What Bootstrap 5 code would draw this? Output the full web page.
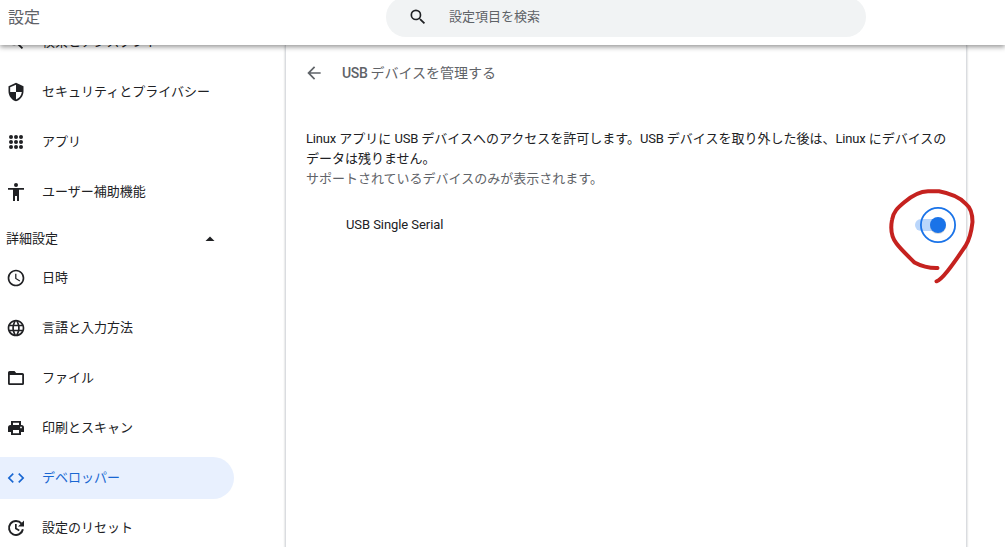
<!DOCTYPE html>
<html lang="ja">
<head>
<meta charset="utf-8">
<meta name="viewport" content="width=device-width, initial-scale=1">
<title>設定</title>
<link href="https://cdn.jsdelivr.net/npm/bootstrap@5.3.0/dist/css/bootstrap.min.css" rel="stylesheet">
<style>
  body { font-family: Roboto, "Noto Sans CJK JP", sans-serif; font-size: 13px; line-height: 20px; color: #202124; background: #fff; }
  .app-header { height: 45px; z-index: 2; background: #fff; box-shadow: 0 2px 5px rgba(0,0,0,.42); }
  .app-title { width: 386px; padding-left: 8px; font-size: 16px; line-height: 24px; color: #5f6368; margin-top: 6px; }
  .search-box { width: 480px; height: 40px; margin-top: -3px; padding-left: 22px; border-radius: 20px; background: #f1f3f4; color: #5f6368; }
  .search-box svg { margin-right: 21px; color: #202124; }
  .side-menu { width: 285px; }
  .side-menu .nav { gap: 8px; }
  .side-menu .nav:first-child { margin-top: -24px; }
  .menu-item { width: 234px; height: 42px; padding: 0 0 0 6px; gap: 16px; color: #202124; border-radius: 0 21px 21px 0; }
  .menu-item:hover { color: #202124; }
  .menu-item.active, .menu-item.active:hover { background: #e8f0fe; color: #1967d2; }
  .menu-group { width: 220px; height: 40px; margin: 4px 0 0; padding: 4px 0 0 6px; }
  .panel { width: 682px; border: 1px solid #dadce0; border-width: 0 1px; box-shadow: 0 0 2px rgba(60,64,67,.3); }
  .panel-head { height: 56px; padding-left: 18px; gap: 18px; color: #5f6368; }
  .panel-head h1 { font-size: 14px; font-weight: 400; line-height: 20px; word-spacing: -.4px; }
  .latin { letter-spacing: -.2px; }
  .panel-head .latin { font-weight: 500; letter-spacing: -.35px; }
  .panel-text { padding: 28px 18px 0 20px; }
  .hint { color: #5f6368; }
  .device-row { height: 52px; padding: 0 10px 0 60px; margin-top: 10px; }
  .device-name { letter-spacing: -.07px; }
  .toggle-area { width: 41px; height: 36px; }
  .mark-ring { left: -31px; top: -22px; z-index: 3; pointer-events: none; }
  svg { flex: none; fill: currentColor; }
</style>
</head>
<body class="vh-100 overflow-hidden d-flex flex-column">
<header class="app-header d-flex align-items-start position-relative flex-shrink-0">
  <div class="app-title">設定</div>
  <div class="search-box d-flex align-items-center">
    <svg width="20" height="20" viewBox="0 0 24 24"><path d="M15.5 14h-.79l-.28-.27A6.47 6.47 0 0 0 16 9.5 6.5 6.5 0 1 0 9.500 16c1.610 0 3.090-.59 4.230-1.570l.27.28v.79l5 4.990L20.490 19zM9.500 14a4.500 4.500 0 1 1 0-9 4.500 4.500 0 0 1 0 9z"/></svg>
    <span>設定項目を検索</span>
  </div>
</header>
<div class="d-flex flex-grow-1">
  <aside class="side-menu flex-shrink-0">
    <nav class="nav flex-column flex-nowrap">
      <a class="menu-item d-flex align-items-center text-decoration-none" href="#">
        <svg width="20" height="20" viewBox="0 0 24 24"><path d="M15.500 14h-.79l-.28-.27A6.470 6.470 0 0 0 16 9.500 6.500 6.500 0 1 0 9.500 16c1.610 0 3.090-.59 4.230-1.570l.27.28v.79l5 4.990L20.490 19zM9.500 14a4.500 4.500 0 1 1 0-9 4.500 4.500 0 0 1 0 9z"/></svg>検索とアシスタント</a>
      <a class="menu-item d-flex align-items-center text-decoration-none" href="#">
        <svg width="20" height="20" viewBox="0 0 24 24"><path d="M12 1 3 5v6c0 5.550 3.840 10.740 9 12 5.160-1.260 9-6.450 9-12V5zm0 10.990h7c-.53 4.120-3.280 7.790-7 8.940V12H5V6.300l7-3.110z"/></svg>セキュリティとプライバシー</a>
      <a class="menu-item d-flex align-items-center text-decoration-none" href="#">
        <svg width="20" height="20" viewBox="0 0 20 20"><g><circle cx="5" cy="5" r="2"/><circle cx="10" cy="5" r="2"/><circle cx="15" cy="5" r="2"/><circle cx="5" cy="10" r="2"/><circle cx="10" cy="10" r="2"/><circle cx="15" cy="10" r="2"/><circle cx="5" cy="15" r="2"/><circle cx="10" cy="15" r="2"/><circle cx="15" cy="15" r="2"/></g></svg>アプリ</a>
      <a class="menu-item d-flex align-items-center text-decoration-none" href="#">
        <svg width="20" height="20" viewBox="0 0 20 20"><circle cx="10" cy="3" r="2"/><path d="M2 6h16v1.800h-5V19h-2v-5H9v5H7V7.800H2z"/></svg>ユーザー補助機能</a>
    </nav>
    <div class="menu-group d-flex align-items-center justify-content-between">
      <span>詳細設定</span>
      <svg width="20" height="20" viewBox="0 0 20 20"><path d="M5.500 12 10 7.500l4.500 4.500z"/></svg>
    </div>
    <nav class="nav flex-column flex-nowrap">
      <a class="menu-item d-flex align-items-center text-decoration-none" href="#">
        <svg width="20" height="20" viewBox="0 0 24 24"><path d="M11.990 2C6.470 2 2 6.480 2 12s4.470 10 9.990 10C17.520 22 22 17.520 22 12S17.520 2 11.990 2zM12 20a8 8 0 1 1 0-16 8 8 0 0 1 0 16zm.5-13H11v6l5.250 3.150.75-1.230-4.500-2.670z"/></svg>日時</a>
      <a class="menu-item d-flex align-items-center text-decoration-none" href="#">
        <svg width="20" height="20" viewBox="0 0 24 24"><path d="M11.990 2C6.470 2 2 6.480 2 12s4.470 10 9.990 10C17.520 22 22 17.520 22 12S17.520 2 11.990 2zm6.930 6h-2.950a15.650 15.650 0 0 0-1.380-3.560A8.030 8.030 0 0 1 18.920 8zM12 4.040c.83 1.200 1.480 2.530 1.910 3.960h-3.820c.43-1.430 1.080-2.760 1.910-3.960zM4.260 14a8.240 8.240 0 0 1 0-4h3.380a16.500 16.500 0 0 0 0 4zm.82 2h2.950c.32 1.250.78 2.450 1.380 3.560A7.990 7.990 0 0 1 5.080 16zm2.950-8H5.080a7.990 7.990 0 0 1 4.330-3.560A15.650 15.650 0 0 0 8.030 8zM12 19.960c-.83-1.200-1.480-2.530-1.910-3.960h3.820A13.900 13.900 0 0 1 12 19.960zM14.340 14H9.660a14.700 14.700 0 0 1 0-4h4.680a14.700 14.700 0 0 1 0 4zm.25 5.560c.6-1.110 1.060-2.310 1.380-3.560h2.950a8.030 8.030 0 0 1-4.330 3.560zM16.360 14a16.500 16.500 0 0 0 0-4h3.380a8.240 8.240 0 0 1 0 4z"/></svg>言語と入力方法</a>
      <a class="menu-item d-flex align-items-center text-decoration-none" href="#">
        <svg width="20" height="20" viewBox="0 0 20 20"><path fill-rule="evenodd" d="M3.600 3H8.500l1.700 2h6.200A1.600 1.600 0 0 1 18 6.600v8.800a1.600 1.600 0 0 1-1.600 1.600H3.600A1.600 1.600 0 0 1 2 15.400V4.600A1.600 1.600 0 0 1 3.600 3zm.2 4v8.200h12.400V7z"/></svg>ファイル</a>
      <a class="menu-item d-flex align-items-center text-decoration-none" href="#">
        <svg width="20" height="20" viewBox="0 0 20 20"><path fill-rule="evenodd" d="M5 3h10v4h.5A2.500 2.500 0 0 1 18 9.500V14h-3v3H5v-3H2V9.500A2.500 2.500 0 0 1 4.500 7H5zm2 1.800V7h6V4.800zM7 12v3.200h6V12zm8-3.500a.9.900 0 1 0 0 1.800.9.900 0 0 0 0-1.800z"/></svg>印刷とスキャン</a>
      <a class="menu-item active d-flex align-items-center text-decoration-none" href="#">
        <svg width="20" height="20" viewBox="0 0 24 24"><path d="M9.400 16.600 4.800 12l4.600-4.600L8 6l-6 6 6 6zm5.200 0 4.600-4.600-4.600-4.600L16 6l6 6-6 6z"/></svg>デベロッパー</a>
      <a class="menu-item d-flex align-items-center text-decoration-none" href="#">
        <svg width="20" height="20" viewBox="0 0 20 20"><path d="M15.500 5.600A7 7 0 1 0 16.900 11.300" fill="none" stroke="currentColor" stroke-width="2"/><path d="M18 2.500V8.500H12L14.300 6.200 15.600 5zM9 6h1.700v4l3 1.800-.8 1.400L9 10.900z"/></svg>設定のリセット</a>
    </nav>
  </aside>
  <main class="panel flex-shrink-0">
    <div class="panel-head d-flex align-items-center">
      <svg width="20" height="20" viewBox="0 0 24 24"><path d="M20 11H7.830l5.590-5.590L12 4l-8 8 8 8 1.410-1.410L7.830 13H20z"/></svg>
      <h1 class="m-0"><span class="latin">USB</span> デバイスを管理する</h1>
    </div>
    <div class="panel-text">
      <div><span class="latin">Linux</span> アプリに <span class="latin">USB</span> デバイスへのアクセスを許可します。<span class="latin">USB</span> デバイスを取り外した後は、<span class="latin">Linux</span> にデバイスの<br>データは残りません。</div>
      <div class="hint">サポートされているデバイスのみが表示されます。</div>
    </div>
    <div class="device-row d-flex align-items-center justify-content-between">
      <span class="device-name">USB Single Serial</span>
      <div class="toggle-area position-relative" role="switch" aria-checked="true" aria-label="USB Single Serial">
        <svg class="d-block" width="41" height="36" viewBox="0 0 41 36"><rect y="12" width="28" height="12" rx="6" fill="#bad6fb"/><circle cx="23" cy="19" r="8" fill="#3c4043" opacity=".2"/><circle cx="23" cy="18" r="8" fill="#1a73e8"/><circle cx="23" cy="18" r="17.100" fill="none" stroke="#1a73e8" stroke-width="1.800"/></svg>
        <svg class="mark-ring position-absolute" width="96" height="105" viewBox="884 185 96 105"><path d="M937.500 268C929 268.200 921 266 914.500 262.500C908 256 901 249.500 896.500 243.500C891 236.500 890.500 228 892 220C893 212 898 207.500 904 202.500C911 196.500 919 191.500 928 191.300H939C948 193 960 197 966 204C971 208 972.500 215 972.500 222C971.500 231 970.500 238 965.500 246C960 254 954 263 948 270.500C944 275.500 940.500 280 936.500 281.300" fill="none" stroke="#c5221f" stroke-width="4" stroke-linecap="round" stroke-linejoin="round"/></svg>
      </div>
    </div>
  </main>
</div>
<script src="https://cdn.jsdelivr.net/npm/bootstrap@5.3.0/dist/js/bootstrap.bundle.min.js"></script>
</body>
</html>
